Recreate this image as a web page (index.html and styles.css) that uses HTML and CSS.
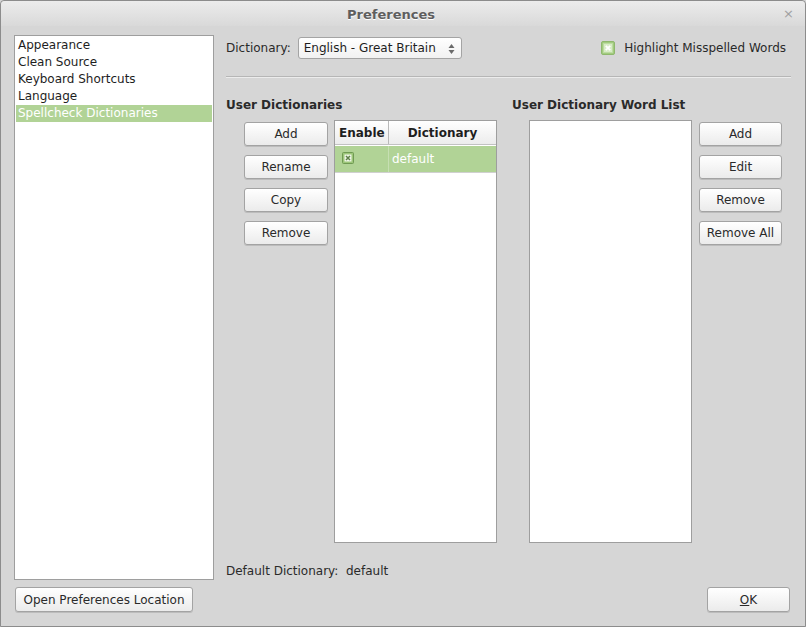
FILE: index.html
```html
<!DOCTYPE html>
<html>
<head>
<meta charset="utf-8">
<link rel="stylesheet" href="styles.css">
</head>
<body>
<div class="window">
  <div class="titlebar">
    <span class="title">Preferences</span>
    <span class="close">×</span>
  </div>
  <div class="content">
    <ul class="navlist">
      <li>Appearance</li>
      <li>Clean Source</li>
      <li>Keyboard Shortcuts</li>
      <li>Language</li>
      <li class="selected">Spellcheck Dictionaries</li>
    </ul>
    <div class="main">
      <div class="toprow">
        <div class="dictpick">
          <span class="label">Dictionary:</span>
          <div class="combo">
            <span>English - Great Britain</span>
            <svg class="spin" width="7" height="12" viewBox="0 0 7 12"><path d="M3.5 1 L6.5 5 L0.5 5 Z" fill="#6a6a6a"/><path d="M3.5 11 L6.5 7 L0.5 7 Z" fill="#6a6a6a"/></svg>
          </div>
        </div>
        <label class="check">
          <svg class="cbox" width="14" height="14" viewBox="0 0 14 14"><rect x="0.5" y="0.5" width="13" height="13" rx="1.5" fill="#a2cb7f" stroke="#8fb86d"/><rect x="2.5" y="2.5" width="9" height="9" fill="#d9ecc8" stroke="#bcdca1"/><path d="M4.8 4.8 L9.2 9.2 M9.2 4.8 L4.8 9.2" stroke="#ffffff" stroke-width="1.8"/></svg>
          <span>Highlight Misspelled Words</span>
        </label>
      </div>
      <div class="separator"></div>
      <div class="panes">
        <section class="pane">
          <h2>User Dictionaries</h2>
          <div class="pane-body left">
            <div class="btncol">
              <button class="btn">Add</button>
              <button class="btn">Rename</button>
              <button class="btn">Copy</button>
              <button class="btn">Remove</button>
            </div>
            <div class="table">
              <div class="thead">
                <div class="c1">Enable</div>
                <div class="c2">Dictionary</div>
              </div>
              <div class="trow">
                <div class="c1"><svg width="12" height="12" viewBox="0 0 12 12"><rect x="0.5" y="0.5" width="11" height="11" rx="1" fill="#9cc679" stroke="#6f9a52"/><rect x="2.5" y="2.5" width="7" height="7" fill="#eef6e6"/><path d="M4 4 L8 8 M8 4 L4 8" stroke="#5f7f4a" stroke-width="1.5"/></svg></div>
                <div class="c2">default</div>
              </div>
            </div>
          </div>
        </section>
        <section class="pane">
          <h2>User Dictionary Word List</h2>
          <div class="pane-body right">
            <div class="wordlist"></div>
            <div class="btncol">
              <button class="btn">Add</button>
              <button class="btn">Edit</button>
              <button class="btn">Remove</button>
              <button class="btn">Remove All</button>
            </div>
          </div>
        </section>
      </div>
      <div class="defaultrow">Default Dictionary:&nbsp; default</div>
    </div>
    <div class="bottom-left">
      <button class="btn wide">Open Preferences Location</button>
    </div>
    <div class="bottom-right">
      <button class="btn ok"><u>O</u>K</button>
    </div>
  </div>
</div>
</body>
</html>
```

FILE: styles.css
```css
* { box-sizing: border-box; }
html, body { margin: 0; padding: 0; }
body {
  font-family: "DejaVu Sans", sans-serif;
  font-size: 12px;
  color: #2a2a2a;
  background: #d6d6d6;
}
.window {
  width: 806px;
  height: 627px;
  border: 1px solid #8c8c8c;
  border-radius: 4px 4px 0 0;
  background: #d6d6d6;
  display: flex;
  flex-direction: column;
}
.titlebar {
  height: 25px;
  flex: none;
  position: relative;
  display: flex;
  align-items: center;
  justify-content: center;
  padding-right: 24px;
  background: linear-gradient(#ececec, #d9d9d9);
  border-radius: 4px 4px 0 0;
}
.title {
  font-weight: bold;
  font-size: 13px;
  color: #5e5e5e;
  text-shadow: 0 1px 0 #ffffff;
  margin-top: 1px;
}
.close {
  position: absolute;
  right: 11px;
  top: 5px;
  font-size: 13px;
  color: #a0a0a0;
}
.content {
  flex: 1;
  display: grid;
  grid-template-columns: 200px 1fr;
  grid-template-rows: 545px auto;
  column-gap: 12px;
  row-gap: 7px;
  padding: 9px 14px 0 13px;
}
.navlist {
  list-style: none;
  margin: 0;
  padding: 1px 1px;
  background: #ffffff;
  border: 1px solid #9e9e9e;
}
.navlist li {
  height: 17px;
  line-height: 17px;
  padding-left: 2px;
  color: #1e1e1e;
}
.navlist li.selected {
  background: #b1d396;
  color: #ffffff;
}
.main {
  display: flex;
  flex-direction: column;
}
.toprow {
  height: 26px;
  display: flex;
  align-items: center;
  justify-content: space-between;
}
.dictpick { display: flex; align-items: center; }
.label { margin-right: 7px; color: #2a2a2a; }
.combo {
  width: 164px;
  height: 22px;
  border: 1px solid #a4a4a4;
  border-radius: 3px;
  background: linear-gradient(#ffffff, #f1f1f1);
  display: flex;
  align-items: center;
  justify-content: space-between;
  padding: 0 6px 0 5px;
  color: #1e1e1e;
}
.spin { margin-top: 1px; }
.check {
  display: flex;
  align-items: center;
  margin-right: 5px;
}
.cbox { margin-right: 9px; }
.separator {
  margin-top: 15px;
  height: 2px;
  border-top: 1px solid #b6b6b6;
  border-bottom: 1px solid #ececec;
}
.panes {
  display: grid;
  grid-template-columns: 286px 1fr;
  margin-top: 18px;
}
.pane h2 {
  margin: 0;
  font-size: 12px;
  font-weight: bold;
  color: #2a2a2a;
  height: 24px;
  padding-top: 2px;
  line-height: 15px;
}
.pane-body { display: flex; }
.pane-body.left { padding-left: 18px; }
.pane-body.right { padding-left: 17px; }
.btncol {
  display: flex;
  flex-direction: column;
  gap: 9px;
  padding-top: 2px;
}
.pane-body.left .btncol { width: 84px; margin-right: 6px; }
.pane-body.right .btncol { width: 83px; margin-left: 7px; }
.btn {
  font-family: "DejaVu Sans", sans-serif;
  font-size: 12px;
  color: #2a2a2a;
  height: 24px;
  padding: 0 6px;
  border: 1px solid #a3a3a3;
  border-radius: 3px;
  background: linear-gradient(#ffffff, #ebebeb);
  box-shadow: 0 1px 0 rgba(0,0,0,0.12);
}
.table {
  width: 163px;
  height: 423px;
  background: #ffffff;
  border: 1px solid #9e9e9e;
}
.thead {
  display: flex;
  height: 24px;
  background: linear-gradient(#ffffff, #ececec);
  border-bottom: 1px solid #c2c2c2;
  font-weight: bold;
  color: #1e1e1e;
}
.thead .c1 {
  width: 54px;
  border-right: 1px solid #b9b9b9;
  display: flex;
  align-items: center;
  padding-left: 4px;
}
.thead .c2 {
  flex: 1;
  display: flex;
  align-items: center;
  justify-content: center;
}
.trow {
  display: flex;
  height: 27px;
  margin-top: 1px;
  background: #b1d396;
  border-bottom: 1px solid #d0d0d0;
  color: #ffffff;
}
.trow .c1 {
  width: 54px;
  border-right: 1px solid #c6dfb2;
  padding: 6px 0 0 7px;
}
.trow .c2 {
  flex: 1;
  display: flex;
  align-items: center;
  padding-left: 3px;
  padding-bottom: 1px;
}
.wordlist {
  width: 163px;
  height: 423px;
  background: #ffffff;
  border: 1px solid #9e9e9e;
}
.defaultrow {
  margin-top: 21px;
  color: #2a2a2a;
}
.bottom-left { display: flex; align-items: flex-start; padding-left: 1px; }
.btn.wide { width: 178px; height: 25px; }
.bottom-right { display: flex; justify-content: flex-end; padding-right: 1px; }
.btn.ok { width: 83px; height: 25px; }
```
